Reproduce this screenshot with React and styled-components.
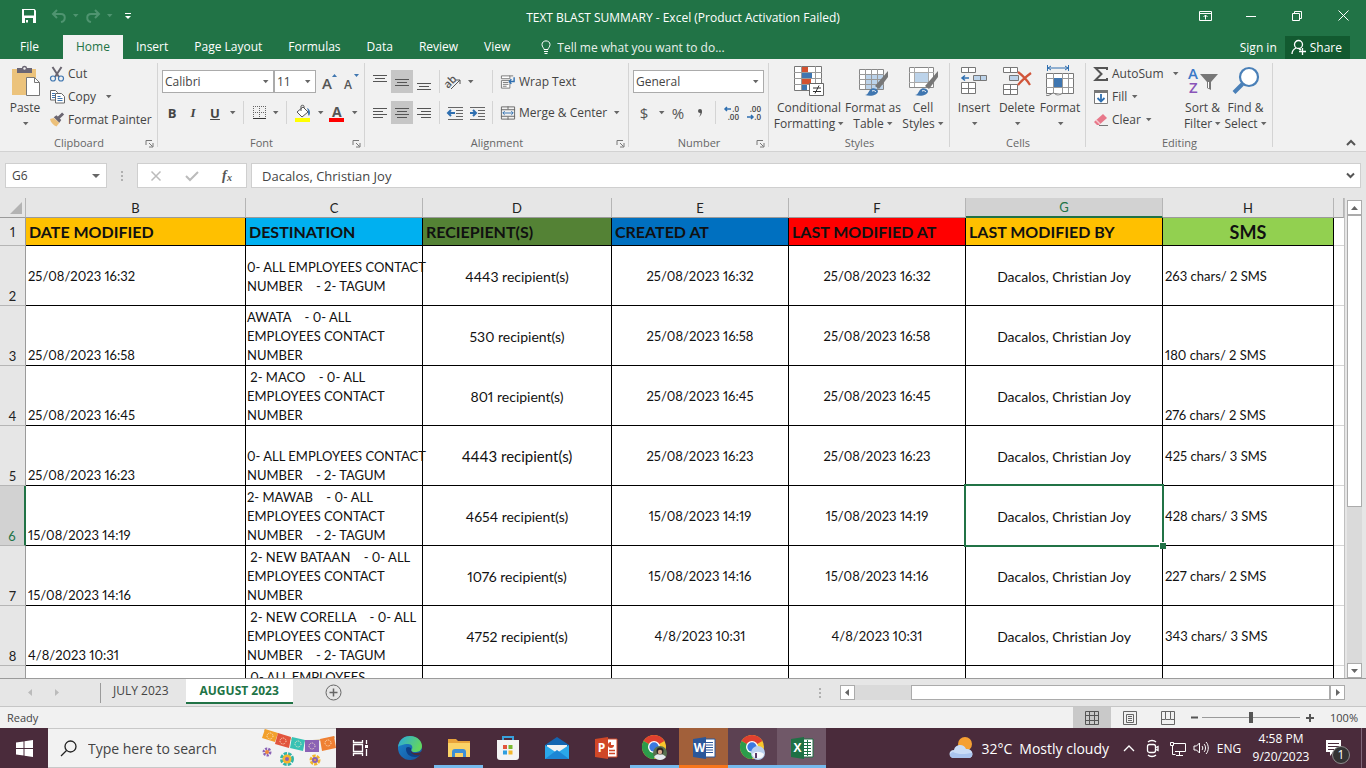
import React from "react";
import styled, { createGlobalStyle } from "styled-components";

const GlobalStyle = createGlobalStyle`
  * {
    box-sizing: border-box;
  }
  body {
    margin: 0;
    font-family: "Open Sans", "Noto Sans", sans-serif;
    font-size: 12px;
    color: #444444;
  }
  button, input, select {
    font: inherit;
    color: inherit;
    margin: 0;
    padding: 0;
    border: none;
    background: none;
  }
  a {
    color: inherit;
    text-decoration: none;
  }
`;

const GREEN = "#217346";

/* ---------- data ---------- */

const tabs = ["Insert", "Page Layout", "Formulas", "Data", "Review", "View"];

const columns = [
  { id: "B", width: 220, label: "DATE MODIFIED", color: "#ffc000" },
  { id: "C", width: 177, label: "DESTINATION", color: "#00b0f0" },
  { id: "D", width: 189, label: "RECIEPIENT(S)", color: "#548235" },
  { id: "E", width: 177, label: "CREATED AT", color: "#0070c0" },
  { id: "F", width: 177, label: "LAST MODIFIED AT", color: "#ff0000" },
  { id: "G", width: 197, label: "LAST MODIFIED BY", color: "#ffc000" },
  { id: "H", width: 171, label: "SMS", color: "#92d050" },
];

const rows = [
  { n: 2, date: "25/08/2023 16:32", dest: "0- ALL EMPLOYEES CONTACT\nNUMBER    - 2- TAGUM", to: "4443 recipient(s)", sms: "263 chars/ 2 SMS", dateAlign: "middle", destAlign: "middle" },
  { n: 3, date: "25/08/2023 16:58", dest: "AWATA    - 0- ALL\nEMPLOYEES CONTACT\nNUMBER", to: "530 recipient(s)", sms: "180 chars/ 2 SMS", smsAlign: "bottom" },
  { n: 4, date: "25/08/2023 16:45", dest: " 2- MACO    - 0- ALL\nEMPLOYEES CONTACT\nNUMBER", to: "801 recipient(s)", sms: "276 chars/ 2 SMS", smsAlign: "bottom" },
  { n: 5, date: "25/08/2023 16:23", dest: "0- ALL EMPLOYEES CONTACT\nNUMBER    - 2- TAGUM", to: "4443 recipient(s)", sms: "425 chars/ 3 SMS", large: true },
  { n: 6, date: "15/08/2023 14:19", dest: "2- MAWAB    - 0- ALL\nEMPLOYEES CONTACT\nNUMBER    - 2- TAGUM", to: "4654 recipient(s)", sms: "428 chars/ 3 SMS", active: true },
  { n: 7, date: "15/08/2023 14:16", dest: " 2- NEW BATAAN    - 0- ALL\nEMPLOYEES CONTACT\nNUMBER", to: "1076 recipient(s)", sms: "227 chars/ 2 SMS" },
  { n: 8, date: "4/8/2023 10:31", dest: " 2- NEW CORELLA    - 0- ALL\nEMPLOYEES CONTACT\nNUMBER    - 2- TAGUM", to: "4752 recipient(s)", sms: "343 chars/ 3 SMS" },
];

/* ---------- small drawings ---------- */

const Svg = ({ w = 16, h = 16, children, ...rest }) => (
  <svg width={w} height={h} viewBox={`0 0 ${w} ${h}`} fill="none" overflow="visible" aria-hidden="true" {...rest}>
    {children}
  </svg>
);

const Caret = ({ color = "#666" }) => (
  <Svg w={7} h={4}>
    <path d="M1 0h5.500L3.700 3.300z" fill={color} />
  </Svg>
);

const Lines = ({ rows: list, h = 16 }) => (
  <Svg w={16} h={h}>
    {list.map(([x, y, len]) => (
      <path key={y} d={`M${x} ${y}.500h${len}`} stroke="#555" />
    ))}
  </Svg>
);

const alignLeft = [[1, 2, 14], [1, 5, 10], [1, 8, 14], [1, 11, 10]];
const alignCenter = [[1, 2, 14], [3, 5, 10], [1, 8, 14], [3, 11, 10]];
const alignRight = [[1, 2, 14], [5, 5, 10], [1, 8, 14], [5, 11, 10]];

const SaveIcon = () => (
  <Svg w={16} h={16}>
    <path d="M1 1h12.500l1.500 1.500V15H1z" fill="#fff" />
    <path d="M3 2h10v5.500H3zM4 10h8v5H4z" fill={GREEN} />
    <path d="M5 12h2v2.500H5z" fill="#fff" />
  </Svg>
);

const UndoIcon = ({ flip }) => (
  <Svg w={16} h={14} style={flip ? { transform: "scaleX(-1)" } : undefined}>
    <path d="M6 1L2 5l4 4M2.500 5H10c5 0 5 7 0 8" stroke="#4f9470" strokeWidth="2" />
  </Svg>
);

const PasteIcon = () => (
  <Svg w={30} h={32}>
    <path d="M2 4h24v26H2z" fill="#ecc37c" />
    <path d="M7 3h5c0-3 5-3 5 0h5v5H7z" fill="#6b6674" />
    <circle cx="14.500" cy="3.500" r="1.200" fill="#f1f1f1" />
    <path d="M16.500 12.500h8l5 5v13h-13z" fill="#fff" stroke="#777" />
    <path d="M24.500 12.500v5h5" stroke="#777" />
  </Svg>
);

const CutIcon = () => (
  <Svg w={15} h={16}>
    <path d="M3 1l6.500 10M12 1L5.500 11" stroke="#6a6570" strokeWidth="2" />
    <circle cx="3.500" cy="12.500" r="2.500" stroke="#3f76b0" strokeWidth="1.200" />
    <circle cx="11.500" cy="12.500" r="2.500" stroke="#3f76b0" strokeWidth="1.200" />
  </Svg>
);

const CopyIcon = () => (
  <Svg w={16} h={16}>
    <path d="M1.500 1.500h5l2 2V11h-7z" fill="#fff" stroke="#666" />
    <path d="M3 4.500h3M3 6.500h3M3 8.500h3" stroke="#3f76b0" />
    <path d="M6.500 4.500h6l3 3V14h-9z" fill="#fff" stroke="#666" />
    <path d="M8.500 7.500h3M8.500 9.500h5M8.500 11.500h5" stroke="#3f76b0" />
  </Svg>
);

const BrushIcon = () => (
  <Svg w={17} h={16}>
    <path d="M1 7l4-1 6 5-3 4c-3-1-6-4-7-8z" fill="#ecc07a" />
    <path d="M5 5l3-2 5 5-2 3z" fill="#6a6570" />
    <path d="M10 6l5-5" stroke="#6a6570" strokeWidth="3" />
  </Svg>
);

const FontSizeIcon = ({ size, up }) => (
  <Svg w={18} h={20}>
    <text x="1" y="17" fontSize={size} fontWeight="600" fill="#555">A</text>
    <path d={up ? "M11 5l2.500-3L16 5z" : "M11 2l2.500 3L16 2z"} fill="#3f76b0" />
  </Svg>
);

const BordersIcon = () => (
  <Svg w={15} h={15}>
    <path d="M1 1.500h13M1 7.500h13M1.500 1v12M7.500 1v12M13.500 1v12" stroke="#666" strokeDasharray="1 1" />
    <path d="M1 13.500h13" stroke="#333" />
  </Svg>
);

const FillColorIcon = () => (
  <Svg w={18} h={18}>
    <path d="M3 8l6-5 5 5-6 5z" fill="#fff" stroke="#555" />
    <path d="M7 7V2c0-1 3-1 3 0v2" stroke="#555" />
    <path d="M13 4c3 1 4 5 2 8-2-2 0-4-2-8z" fill="#3f76b0" />
    <path d="M1 14h15v4H1z" fill="#ffff00" />
  </Svg>
);

const FontColorIcon = () => (
  <Svg w={18} h={20}>
    <text x="4" y="14" fontSize="14" fontWeight="700" fill="#555">A</text>
    <path d="M1 15h15v4H1z" fill="#ff0000" />
  </Svg>
);

const OrientIcon = () => (
  <Svg w={18} h={18}>
    <text x="1" y="13" fontSize="11" fontWeight="600" fill="#555" transform="rotate(-45 6 11)">ab</text>
    <path d="M7 16L16 7M12 7h4v4" stroke="#555" />
  </Svg>
);

const IndentIcon = ({ out }) => (
  <Svg w={17} h={14}>
    <path d="M1 1.500h15M9 4.500h7M9 7.500h7M9 10.500h7M1 13.500h15" stroke="#666" />
    <path d={out ? "M1 7h7M4 4L1 7l3 3" : "M1 7h6M4 4l3 3-3 3"} stroke="#2f6fb0" strokeWidth="2" />
  </Svg>
);

const WrapIcon = () => (
  <Svg w={17} h={16}>
    <path d="M1.500 1.500h9v3h-9zM1.500 6.500h9v8h-9z" fill="#fff" stroke="#777" />
    <path d="M3 8.500h6M3 10.500h6M3 12.500h4M10 1.500h4" stroke="#777" />
    <path d="M15 3v4.500H10M12 5l-2 2.500 2 2.500" stroke="#2f6fb0" strokeWidth="1.500" />
  </Svg>
);

const MergeIcon = () => (
  <Svg w={17} h={16}>
    <path d="M1.500 1.500h14v13h-14zM1 4.500h15M1 11.500h15M8.500 1v3M8.500 12v3" stroke="#666" />
    <path d="M3 8h11M5 6L3 8l2 2M12 6l2 2-2 2" stroke="#2f6fb0" />
  </Svg>
);

const DecimalIcon = ({ more }) => (
  <Svg w={17} h={18}>
    <text x="16" y="8" textAnchor="end" fontSize="8" fontWeight="600" fill="#444">{more ? ".0" : ".00"}</text>
    <text x="16" y="16" textAnchor="end" fontSize="8" fontWeight="600" fill="#444">{more ? ".00" : ".0"}</text>
    <path d={more ? "M2 5h6M4 3L2 5l2 2" : "M2 13h6M6 11l2 2-2 2"} stroke="#2f6fb0" strokeWidth="1.500" />
  </Svg>
);

const CondIcon = () => (
  <Svg w={32} h={32}>
    <path d="M1.500 1.500h27v24h-27z" fill="#fff" stroke="#777" />
    <path d="M1 7.500h28M1 13.500h28M1 19.500h28M8.500 1v24M22.500 1v24" stroke="#999" />
    <path d="M9 2h6v5H9zM9 14h9v5H9z" fill="#d35230" />
    <path d="M9 8h10v5H9z" fill="#3f76b0" />
    <path d="M9 20h5v5H9z" fill="#3f76b0" />
    <path d="M16.500 18.500h14v12h-14z" fill="#fff" stroke="#666" />
    <path d="M20 23h8M20 26.500h8M26 20.500l-4 8" stroke="#333" />
  </Svg>
);

const PaintBrush = () => (
  <>
    <path d="M31 6v6l-9 12-4-3z" fill="#777" />
    <path d="M8 30c3 0 3-3 5-5 2-3 7-2 8 1 0 4-7 6-13 4z" fill="#3f76b0" />
    <path d="M15 26c2-1 3 0 4 1" stroke="#fff" />
  </>
);

const TableStyleIcon = () => (
  <Svg w={32} h={32}>
    <path d="M2.500 4.500h24v20h-24z" fill="#fff" stroke="#888" />
    <path d="M9 10h17v14H9z" fill="#bcd3ea" />
    <path d="M2 9.500h25M2 14.500h25M2 19.500h25M8.500 4v20M14.500 4v20M20.500 4v20" stroke="#999" />
    <PaintBrush />
  </Svg>
);

const CellStyleIcon = () => (
  <Svg w={32} h={32}>
    <path d="M2.500 2.500h24v20h-24z" fill="#fff" stroke="#888" />
    <path d="M2 7.500h25M2 17.500h25M7.500 2v20M21.500 2v20" stroke="#aaa" />
    <path d="M8 8h13v9H8z" fill="#bcd3ea" />
    <PaintBrush />
  </Svg>
);

const InsertIcon = () => (
  <Svg w={30} h={30}>
    <path d="M2.500 1.500h14v5h-14zM9.500 1v6M2.500 16.500h14v11h-14zM2 22.500h14M9.500 16v11" fill="#fff" stroke="#777" />
    <path d="M14.500 9.500h13v5h-13zM21.500 9v6" fill="#bcd3ea" stroke="#777" />
    <path d="M3 12h7M6 9.500L3 12l3 2.500" stroke="#2f6fb0" strokeWidth="1.500" />
  </Svg>
);

const DeleteIcon = () => (
  <Svg w={32} h={30}>
    <path d="M2.500 1.500h14v5h-14zM9.500 1v6M2.500 18.500h14v10h-14zM2 23.500h14M9.500 18v11" fill="#fff" stroke="#777" />
    <path d="M8.500 9.500h9v5h-9z" fill="#bcd3ea" stroke="#777" />
    <path d="M17 6c4 3 9 8 12 13M30 7c-4 3-9 7-13 12" stroke="#d1553a" strokeWidth="2.200" />
  </Svg>
);

const FormatIcon = () => (
  <Svg w={30} h={32}>
    <path d="M2.500 0v6M23.500 0v6M3 3h20M6 1L3 3l3 2M20 1l3 2-3 2" stroke="#2f6fb0" />
    <path d="M1.500 8.500h27v20h-27z" fill="#fff" stroke="#777" />
    <path d="M1 13.500h28M1 22.500h28M8.500 8v20M17.500 8v20M23.500 8v20" stroke="#999" />
    <path d="M9 13h8v9H9z" fill="#3f76b0" />
    <path d="M1 30c3 2 5-2 8-2 2 2 4 3 9 0" fill="#fff" stroke="#777" />
  </Svg>
);

const SumIcon = () => (
  <Svg w={16} h={16}>
    <path d="M14 4V2H2.500l6 6-6 6H14v-2" stroke="#555" strokeWidth="2" />
  </Svg>
);

const FillIcon = () => (
  <Svg w={16} h={16}>
    <path d="M1.500 1.500h13v13h-13z" fill="#fff" stroke="#777" />
    <path d="M1 1h14v3H1z" fill="#777" />
    <path d="M8 5v7M4.500 9L8 12.500 11.500 9" stroke="#2f6fb0" strokeWidth="1.800" />
  </Svg>
);

const EraserIcon = () => (
  <Svg w={16} h={16}>
    <path d="M1 10l9-8 4 4-8 7H4z" fill="#e8788a" />
    <path d="M3 8l4 4" stroke="#f7c9d0" strokeWidth="1.500" />
    <path d="M6 13.500h9" stroke="#777" />
  </Svg>
);

const SortIcon = () => (
  <Svg w={30} h={30}>
    <text x="0" y="13" fontSize="15" fontWeight="600" fill="#3a79c8">A</text>
    <text x="1" y="27" fontSize="15" fontWeight="600" fill="#8a55b8">Z</text>
    <path d="M12 8h18l-7 8v8l-4-2v-6z" fill="#777" />
    <path d="M20.500 16v6" stroke="#fff" />
  </Svg>
);

const FindIcon = () => (
  <Svg w={30} h={30}>
    <circle cx="18" cy="11" r="9" fill="#fff" stroke="#4a80b8" strokeWidth="2.200" />
    <path d="M11.500 18L3 26.500" stroke="#4a80b8" strokeWidth="4" />
  </Svg>
);

const LauncherIcon = () => (
  <Svg w={9} h={9}>
    <path d="M1 6V1.500h6M4 4l3.500 3.500M8 4v4H4" stroke="#777" />
  </Svg>
);

const Picado = () => (
  <Svg w={74} h={38}>
    <path d="M2 1l14 4 13 5 14 2 15-1 15-3" stroke="#c9a46a" />
    <path d="M3 0l13 4-3 9-13-4z" fill="#f2a02c" />
    <path d="M16 4l13 4-2 11-14-4z" fill="#e2553d" />
    <path d="M30 8l13 3-2 11-13-3z" fill="#37c2b4" />
    <path d="M43 11h14v12H43z" fill="#8b62b5" />
    <path d="M58 10l14-3 2 12-14 3z" fill="#ef8033" />
    <g fill="none" stroke="#ffe9cf" strokeDasharray="1 1">
      <circle cx="8" cy="7" r="3" />
      <circle cx="21" cy="12" r="3" />
      <circle cx="36" cy="15" r="3" />
      <circle cx="50" cy="17" r="3" />
      <circle cx="66" cy="14" r="3" />
    </g>
    <circle cx="5" cy="23" r="3" stroke="#8b62b5" strokeWidth="3" strokeDasharray="2 1" />
    <circle cx="5" cy="23" r="2" fill="#f08a3c" />
    <circle cx="25" cy="30" r="5" stroke="#2fb5a8" strokeWidth="4" strokeDasharray="3 1" />
    <circle cx="25" cy="30" r="4.500" fill="#f5b52e" />
    <circle cx="25" cy="30" r="2" fill="#8b62b5" />
    <circle cx="53" cy="31" r="4" stroke="#f2b52c" strokeWidth="3" strokeDasharray="3 1" />
    <circle cx="53" cy="31" r="3" fill="#8b62b5" />
    <circle cx="53" cy="31" r="1" fill="#f2b52c" />
  </Svg>
);

const EdgeIcon = () => (
  <Svg w={26} h={26}>
    <defs>
      <linearGradient id="edgeTop" x1="0" y1="0" x2="1" y2="0.400">
        <stop offset="0" stopColor="#2aa7e0" />
        <stop offset="1" stopColor="#62d660" />
      </linearGradient>
      <linearGradient id="edgeLow" x1="0" y1="0" x2="1" y2="1">
        <stop offset="0" stopColor="#1c86cf" />
        <stop offset="1" stopColor="#15529c" />
      </linearGradient>
    </defs>
    <circle cx="13" cy="13" r="12" fill="url(#edgeLow)" />
    <path d="M1 12C2 4 8 1 13 1c8 0 12 6 12 10 0 5-4 6-7 6-4 0-4-2-3-3 1-2 0-5-4-5-5 0-9 2-10 3z" fill="url(#edgeTop)" />
    <path d="M9 14c0 5 4 8 9 8 3 0 5-2 6-3-1 1-11 2-10-6-3-2-5-1-5 1z" fill="#0e3f86" />
    <path d="M14 13c-1 3 1 5 5 5 3 0 5-1 6-2v3l-2 1c-6 1-11-2-9-7z" fill="#4a2b3b" />
  </Svg>
);

const FolderIcon = () => (
  <Svg w={24} h={22}>
    <path d="M1 2h8l2 2h12v5H1z" fill="#e8a33a" />
    <path d="M1 6h22v14H1z" fill="#fbd367" />
    <path d="M5 20v-5c0-2 1-3 3-3h8c2 0 3 1 3 3v5h-3v-4H8v4z" fill="#3d8fd6" />
  </Svg>
);

const StoreIcon = () => (
  <Svg w={24} h={26}>
    <path d="M7 6V2h10v4" stroke="#38a1dc" strokeWidth="2" />
    <path d="M1 5h22v17c0 2-1 3-3 3H4c-2 0-3-1-3-3z" fill="#f4f4f4" />
    <path d="M7 10h4v4H7z" fill="#e2553d" />
    <path d="M12.500 10h4v4h-4z" fill="#79b82f" />
    <path d="M7 15.500h4v4H7z" fill="#2f9fe0" />
    <path d="M12.500 15.500h4v4h-4z" fill="#f4b82c" />
  </Svg>
);

const MailIcon = () => (
  <Svg w={26} h={24}>
    <path d="M1 9l12-8 12 8v3H1z" fill="#1465b0" />
    <path d="M3 9h20v8H3z" fill="#f2f2f2" />
    <path d="M1 9l12 8L25 9v14H1z" fill="#2aa8ea" />
    <path d="M1 23l12-9 12 9z" fill="#1c86d4" />
  </Svg>
);

const OfficeIcon = ({ letter, color, kind }) => (
  <Svg w={24} h={24}>
    <path d="M12 3h11v18H12z" fill="#fff" stroke={color} />
    {kind === "sheet" && <path d="M14 6.500h7M14 9.500h7M14 12.500h7M14 15.500h7M14 18.500h7M17.500 4v16" stroke={color} />}
    {kind === "doc" && <path d="M14 6.500h7M14 9h7M14 11.500h7M14 14h7M14 16.500h7" stroke={color} />}
    {kind === "deck" && (
      <>
        <circle cx="17" cy="9" r="3" fill={color} />
        <path d="M17 9V5h4v4z" fill="#fff" />
        <path d="M15 14.500h6M15 17.500h6" stroke={color} strokeWidth="1.500" />
      </>
    )}
    <path d="M1 3l13-2v22L1 21z" fill={color} />
    <text x="7.500" y="16" fontSize="12" fontWeight="700" fill="#fff" textAnchor="middle">{letter}</text>
  </Svg>
);

const ChromeIcon = ({ snow }) => (
  <Svg w={28} h={28}>
    <circle cx="13" cy="13" r="12" fill="#f8c62c" />
    <path d="M13 13L2.600 7A12 12 0 0 1 23.400 7z" fill="#e0402f" />
    <path d="M2.600 7A12 12 0 0 0 13 25l5-9-5-3z" fill="#2c9c4b" />
    <circle cx="13" cy="13" r="6" fill="#fff" />
    <circle cx="13" cy="13" r="4.700" fill="#3c79e0" />
    <circle cx="19" cy="19" r="7" fill={snow ? "#b9d0ee" : "#58714f"} />
    {snow ? (
      <>
        <path d="M13 20c4-3 8-3 12 0-1 6-10 6-12 0z" fill="#f6f9fd" />
        <path d="M17 19v5" stroke="#5b3a68" strokeWidth="2" />
      </>
    ) : (
      <>
        <path d="M13 23c2-4 9-4 12 0-3 4-9 4-12 0z" fill="#e6e9ee" />
        <circle cx="19" cy="17" r="3.500" fill="#2c2523" />
        <circle cx="19" cy="18" r="2.200" fill="#d9a98d" />
      </>
    )}
  </Svg>
);

const WeatherIcon = () => (
  <Svg w={26} h={24}>
    <circle cx="17" cy="8" r="7" fill="#f5a033" />
    <path d="M6 22c-6 0-6-8 0-8 1-6 10-7 12-1 7-1 9 8 3 9z" fill="#c9dcf6" />
    <path d="M5 22c-4-1-4-5 0-6 6 3 12 2 19 1 1 3-1 5-4 5z" fill="#a9c4ee" />
  </Svg>
);

/* ---------- title bar and tabs ---------- */

const Window = styled.div`
  display: flex;
  flex-direction: column;
  height: 100vh;
  overflow: hidden;
  background: #e6e6e6;
`;

const TitleBar = styled.header`
  display: flex;
  height: 35px;
  flex: none;
  background: ${GREEN};
  color: #fff;
`;

const QuickAccess = styled.div`
  display: flex;
  align-items: center;
  width: 184px;
  padding-left: 21px;
  padding-bottom: 4px;
`;

const IconButton = styled.button`
  display: flex;
  align-items: center;
  justify-content: ${(p) => p.$justify || "center"};
  gap: 5px;
  flex: none;
  width: ${(p) => p.$width || 22}px;
  height: 23px;
  background: ${(p) => (p.$on ? "#c6c6c6" : "transparent")};
`;

const Title = styled.div`
  flex: 1;
  text-align: center;
  font-size: 12px;
  line-height: 35px;
  white-space: nowrap;
`;

const WindowButton = styled.button`
  display: flex;
  align-items: center;
  justify-content: center;
  width: 46px;
  height: 31px;
`;

const TabStrip = styled.nav`
  display: flex;
  align-items: center;
  flex: none;
  height: 24px;
  background: ${GREEN};
  color: #fff;
  font-size: 12px;
  white-space: nowrap;
`;

const Tab = styled.a`
  display: block;
  height: 24px;
  line-height: 24px;
  padding: 0 13px;
  background: ${(p) => (p.$active ? "#f1f1f1" : "transparent")};
  color: ${(p) => (p.$active ? GREEN : "#fff")};
`;

const FileTab = styled(Tab)`
  width: 63px;
  padding: 0 20px;
`;

const TellMe = styled.label`
  display: flex;
  align-items: center;
  gap: 6px;
  flex: 1;
  padding-left: 18px;

  input {
    width: 200px;
  }
  input::placeholder {
    color: #fff;
    opacity: 0.9;
  }
`;

const ShareButton = styled.button`
  display: flex;
  align-items: center;
  gap: 3px;
  height: 23px;
  margin: 0 16px 0 8px;
  padding: 0 8px 0 6px;
  background: #125a30;
`;

/* ---------- ribbon ---------- */

const Ribbon = styled.section`
  display: flex;
  flex: none;
  height: 93px;
  background: #f1f1f1;
  border-bottom: 1px solid #d2d2d2;
`;

const GroupBox = styled.div`
  position: relative;
  display: flex;
  flex-direction: column;
  flex: none;
  width: ${(p) => p.$width}px;

  &::after {
    content: "";
    position: absolute;
    right: 0;
    top: 4px;
    bottom: 4px;
    width: 1px;
    background: #d4d4d4;
  }
`;

const GroupBody = styled.div`
  display: flex;
  flex: 1;
  padding-left: ${(p) => p.$pad || 3}px;
`;

const GroupFoot = styled.div`
  display: grid;
  grid-template-columns: 18px 1fr 18px;
  height: 17px;
  line-height: 18px;
  font-size: 11px;
  color: #666;
  text-align: center;

  button {
    grid-column: 3;
    height: 18px;
    line-height: 0;
  }
  span {
    grid-column: 2;
  }
`;

const TwoRows = styled.div`
  display: flex;
  flex-direction: column;
  gap: 8px;
  padding-top: 11px;
`;

const ToolRow = styled.div`
  display: flex;
  align-items: center;
  height: 23px;
`;

const Divider = styled.i`
  width: 1px;
  height: 23px;
  margin: 0 ${(p) => p.$gap || 4}px;
  background: #d4d4d4;
`;

const CommandColumn = styled.div`
  display: flex;
  flex-direction: column;
  padding-top: 3px;
  width: ${(p) => p.$width || "auto"};
`;

const Command = styled.button`
  display: flex;
  align-items: center;
  gap: 3px;
  height: 23px;
  padding: 0 3px;
  white-space: nowrap;
  text-align: left;

  svg:first-child {
    flex: none;
    width: 16px;
  }
  span + svg {
    margin-left: ${(p) => p.$caretGap || 3}px;
  }
`;

const BigButton = styled.button`
  display: flex;
  flex-direction: column;
  align-items: center;
  flex: none;
  width: ${(p) => p.$width}px;
  padding-top: 6px;
  line-height: 16px;
  white-space: nowrap;

  > svg:first-child {
    height: 35px;
    flex: none;
    padding-bottom: 3px;
  }
  span {
    display: flex;
    align-items: center;
    gap: 2px;
    height: 16px;
  }
`;

const Combo = styled.div`
  display: flex;
  align-items: center;
  width: ${(p) => p.$width}px;
  height: 23px;
  margin-right: ${(p) => p.$gap || 0}px;
  background: #fff;
  border: 1px solid #ababab;

  select {
    flex: 1;
    min-width: 0;
    padding-left: 2px;
    appearance: none;
    outline: none;
  }
  svg {
    margin-right: 4px;
    flex: none;
  }
`;

const Letter = styled.span`
  font-weight: 700;
  font-size: 13px;
  font-style: ${(p) => (p.$italic ? "italic" : "normal")};
  font-family: ${(p) => (p.$italic ? '"Liberation Serif", serif' : "inherit")};
  text-decoration: ${(p) => (p.$underline ? "underline" : "none")};
  color: #444;
`;

const Symbol = styled.span`
  font-size: 15px;
  color: #555;
`;

const Collapse = styled.button`
  margin: auto 7px 3px auto;
  width: 16px;
  height: 12px;
  line-height: 0;
`;

const Group = ({ name, width, pad, launcher, children }) => (
  <GroupBox $width={width}>
    <GroupBody $pad={pad}>{children}</GroupBody>
    <GroupFoot>
      <span>{name}</span>
      {launcher && (
        <button aria-label={`${name} settings`}>
          <LauncherIcon />
        </button>
      )}
    </GroupFoot>
  </GroupBox>
);

const Picker = ({ label, value, width, gap }) => (
  <Combo $width={width} $gap={gap}>
    <select aria-label={label} defaultValue={value}>
      <option>{value}</option>
    </select>
    <Caret />
  </Combo>
);

/* ---------- formula bar ---------- */

const FormulaBar = styled.div`
  display: flex;
  flex: none;
  height: 46px;
  padding: 11px 5px 10px;
  font-size: 12px;
`;

const FormulaBox = styled.div`
  display: flex;
  align-items: center;
  flex: ${(p) => (p.$width ? "none" : 1)};
  width: ${(p) => (p.$width ? `${p.$width}px` : "auto")};
  height: 25px;
  padding: 0 5px 0 ${(p) => p.$pad || 6}px;
  margin-right: ${(p) => p.$gap || 0}px;
  background: #fff;
  border: 1px solid #cfcfcf;
  font-size: ${(p) => (p.$width ? 12 : 13)}px;

  input {
    flex: 1;
    min-width: 0;
    outline: none;
  }
`;

const Grip = styled.div`
  display: flex;
  flex-direction: column;
  justify-content: center;
  gap: 2px;
  width: ${(p) => p.$width}px;
  align-items: center;

  i {
    width: 2px;
    height: 2px;
    background: #b0b0b0;
  }
`;

/* ---------- sheet ---------- */

const SheetArea = styled.main`
  display: flex;
  flex: 1;
  min-height: 0;
`;

const SheetView = styled.div`
  flex: 1;
  min-width: 0;
  overflow: hidden;
  border-right: 1px solid #c0c0c0;
`;

const Table = styled.table`
  width: 100%;
  table-layout: fixed;
  border-collapse: separate;
  border-spacing: 0;
  color: #111;
  font-family: Lato, "Open Sans", sans-serif;
  font-size: 13px;
  font-variant-ligatures: none;
  font-variant-numeric: proportional-nums;
`;

const ColHead = styled.th`
  height: 20px;
  padding: 0;
  font-weight: 400;
  background: ${(p) => (p.$active ? "#d2d2d2" : "#e6e6e6")};
  color: ${(p) => (p.$active ? GREEN : "#222")};
  border-right: 1px solid #b5b5b5;
  border-bottom: ${(p) => (p.$active ? `2px solid ${GREEN}` : "1px solid #9b9b9b")};
  line-height: 18px;
  text-align: center;

  svg {
    display: block;
    margin: 2px 2px 0 auto;
  }
`;

const RowHead = styled.th`
  padding: 0;
  font-weight: 400;
  line-height: 18px;
  text-align: center;
  vertical-align: ${(p) => p.$align || "bottom"};
  background: ${(p) => (p.$active ? "#d2d2d2" : "#e6e6e6")};
  color: ${(p) => (p.$active ? GREEN : "#222")};
  border-right: ${(p) => (p.$active ? `2px solid ${GREEN}` : "1px solid #9b9b9b")};
  border-bottom: 1px solid #b5b5b5;
`;

const Label = styled.td`
  height: 28px;
  padding: 1px 3px 0;
  background: ${(p) => p.$color};
  border-right: 1px solid #000;
  border-bottom: 1px solid #000;
  font-weight: 700;
  font-size: ${(p) => (p.$center ? 18 : 16)}px;
  line-height: 26px;
  text-align: ${(p) => (p.$center ? "center" : "left")};
  white-space: nowrap;
`;

const Cell = styled.td`
  height: 60px;
  padding: 2px ${(p) => (p.$tight ? 1 : 2)}px 0;
  border-right: 1px solid #000;
  border-bottom: 1px solid #000;
  background: #fff;
  font-size: ${(p) => p.$size || 13}px;
  line-height: 19px;
  text-align: ${(p) => (p.$center ? "center" : "left")};
  vertical-align: ${(p) => p.$align || "middle"};
  white-space: pre;
`;

const ActiveCell = styled(Cell)`
  position: relative;
`;

const Blank = styled.td`
  background: #fff;
  border-bottom: 1px solid #d4d4d4;
`;

const Selection = styled.div`
  position: absolute;
  inset: -2px;
  border: 2px solid ${GREEN};

  &::after {
    content: "";
    position: absolute;
    right: -4px;
    bottom: -4px;
    width: 6px;
    height: 6px;
    background: ${GREEN};
    border: 1px solid #fff;
    border-width: 1px 0 0 1px;
  }
`;

const VScroll = styled.div`
  display: flex;
  flex-direction: column;
  width: 21px;
  padding: 2px 4px 0 2px;
`;

const ScrollButton = styled.button`
  display: flex;
  align-items: center;
  justify-content: center;
  flex: none;
  width: 15px;
  height: 15px;
  background: #fff;
  border: 1px solid #ababab;
`;

const Thumb = styled.div`
  flex: ${(p) => p.$grow};
  background: #fff;
  border: 1px solid #ababab;
`;

const Track = styled.div`
  flex: ${(p) => p.$grow};
  background: #dadada;
`;

/* ---------- sheet tabs and status bar ---------- */

const SheetBar = styled.div`
  display: flex;
  align-items: center;
  flex: none;
  height: 29px;
  padding: 0 21px 0 15px;
  border-top: 1px solid #9b9b9b;
  border-bottom: 1px solid #c6c6c6;
  white-space: nowrap;
`;

const SheetNav = styled.div`
  display: flex;
  align-items: center;
  width: 86px;
  height: 20px;
  border-right: 1px solid #9b9b9b;
`;

const SheetTab = styled.button`
  align-self: flex-start;
  height: 25px;
  padding: ${(p) => (p.$active ? "0 14px" : "0 17px 0 12px")};
  font-size: 12px;
  font-weight: ${(p) => (p.$active ? 700 : 400)};
  color: ${(p) => (p.$active ? GREEN : "#444")};
  background: ${(p) => (p.$active ? "#fff" : "transparent")};
  border-bottom: 2px solid ${(p) => (p.$active ? GREEN : "transparent")};
`;

const HScroll = styled.div`
  display: flex;
  width: 38%;
`;

const StatusBar = styled.footer`
  display: flex;
  align-items: center;
  flex: none;
  height: 21px;
  padding: 0 8px 0 7px;
  background: #f1f1f1;
  font-size: 11px;
`;

const ViewButton = styled.button`
  display: flex;
  align-items: center;
  justify-content: center;
  width: 38px;
  height: 21px;
  background: ${(p) => (p.$on ? "#c9c9c9" : "transparent")};
`;

const ZoomSlider = styled.input`
  appearance: none;
  width: 98px;
  height: 12px;
  margin: 0 4px 0 0;
  background: linear-gradient(#9a9a9a, #9a9a9a) center / 100% 1px no-repeat;

  &::-webkit-slider-thumb {
    appearance: none;
    width: 4px;
    height: 11px;
    background: #555;
  }
`;

const Spacer = styled.div`
  flex: 1;
`;

/* ---------- task bar ---------- */

const TaskBar = styled.footer`
  display: flex;
  align-items: center;
  flex: none;
  height: 40px;
  background: #4a2b3b;
  color: #fff;
`;

const StartButton = styled.button`
  display: flex;
  align-items: center;
  justify-content: center;
  width: 48px;
  height: 40px;
`;

const SearchBox = styled.label`
  display: flex;
  align-items: center;
  width: 288px;
  height: 40px;
  padding-left: 12px;
  background: #f2f2f2;
  border: 1px solid #c8c8c8;
  border-width: 1px 0;
  color: #333;

  input {
    flex: 1;
    min-width: 0;
    padding-left: 11px;
    font-size: 14px;
    outline: none;
  }
  input::placeholder {
    color: #444;
  }
`;

const TaskButton = styled.button`
  display: flex;
  align-items: center;
  justify-content: center;
  width: 49px;
  height: 40px;
  background: ${(p) => p.$bg || "transparent"};
  border-bottom: 3px solid ${(p) => p.$bar || "transparent"};
  border-top: 3px solid transparent;
`;

const Weather = styled.button`
  display: flex;
  align-items: center;
  gap: 7px;
  margin-right: 8px;
  font-size: 14px;
  white-space: nowrap;
`;

const TrayButton = styled.button`
  display: flex;
  align-items: center;
  justify-content: center;
  width: 24px;
  height: 40px;
`;

const Clock = styled.div`
  width: 72px;
  margin-right: 6px;
  font-size: 12px;
  line-height: 18px;
  text-align: center;
`;

const Notice = styled.button`
  position: relative;
  width: 30px;
  height: 40px;
  margin-right: 8px;

  svg {
    display: block;
    margin-left: 2px;
  }
  span {
    position: absolute;
    right: 3px;
    bottom: 4px;
    width: 18px;
    height: 18px;
    border: 1px solid #8d8d8d;
    border-radius: 50%;
    background: #333;
    font-size: 12px;
    line-height: 16px;
  }
`;

const Peek = styled.i`
  width: 1px;
  height: 40px;
  margin-right: 4px;
  background: #80687a;
`;

function Header() {
  return (
    <>
      <TitleBar>
        <QuickAccess>
          <IconButton $width={16} aria-label="Save"><SaveIcon /></IconButton>
          <IconButton $width={42} $justify="flex-end" aria-label="Undo"><UndoIcon /><Caret color="#4f9470" /></IconButton>
          <IconButton $width={34} $justify="flex-end" aria-label="Redo"><UndoIcon flip /><Caret color="#4f9470" /></IconButton>
          <IconButton $width={30} aria-label="Customize toolbar">
            <Svg w={8} h={8}><path d="M1 1.500h6" stroke="#fff" /><path d="M1 4h6L4 7z" fill="#fff" /></Svg>
          </IconButton>
        </QuickAccess>
        <Title>TEXT BLAST SUMMARY - Excel (Product Activation Failed)</Title>
        <WindowButton aria-label="Ribbon display options">
          <Svg w={14} h={12}><path d="M1.500 1.500h12v9h-12zM1 3.500h12M7.500 9.500V5M5.500 7l2-2 2 2" stroke="#fff" /></Svg>
        </WindowButton>
        <WindowButton aria-label="Minimize"><Svg w={10} h={10}><path d="M0 5.500h10" stroke="#fff" /></Svg></WindowButton>
        <WindowButton aria-label="Restore">
          <Svg w={10} h={10}><path d="M.5 2.500h7v7h-7zM2.500 2V.5h7v7H8" stroke="#fff" /></Svg>
        </WindowButton>
        <WindowButton aria-label="Close"><Svg w={11} h={11}><path d="M.5.5l10 10M10.500.5l-10 10" stroke="#fff" /></Svg></WindowButton>
      </TitleBar>
      <TabStrip>
        <FileTab href="#file">File</FileTab>
        <Tab href="#home" $active>Home</Tab>
        {tabs.map((t) => (
          <Tab key={t} href={`#${t}`}>{t}</Tab>
        ))}
        <TellMe>
          <Svg w={10} h={14}><path d="M3 9.500C3 8 1 7 1 4.500 1 -.3 9 -.3 9 4.500 9 7 7 8 7 9.500zM3 11.500h4M3.500 13.500h3" stroke="#fff" /></Svg>
          <input aria-label="Tell me what you want to do" placeholder="Tell me what you want to do..." />
        </TellMe>
        <a href="#signin">Sign in</a>
        <ShareButton>
          <Svg w={16} h={16}><circle cx="7.500" cy="5.500" r="4" stroke="#fff" strokeWidth="1.300" /><path d="M1 15c0-3 2-5 4-6M8 10c1 0 2 1 2 1M8 12.500h7M11.500 9v7" stroke="#fff" strokeWidth="1.300" /></Svg>
          Share
        </ShareButton>
      </TabStrip>
    </>
  );
}

function HomeRibbon() {
  return (
    <Ribbon>
      <Group name="Clipboard" width={158} pad={4} launcher>
        <BigButton $width={42}>
          <PasteIcon />
          <span>Paste</span>
          <span><Caret /></span>
        </BigButton>
        <CommandColumn>
          <Command><CutIcon /><span>Cut</span></Command>
          <Command $caretGap={6}><CopyIcon /><span>Copy</span><Caret /></Command>
          <Command><BrushIcon /><span>Format Painter</span></Command>
        </CommandColumn>
      </Group>

      <Group name="Font" width={207} pad={4} launcher>
        <TwoRows>
          <ToolRow>
            <Picker label="Font" value="Calibri" width={112} />
            <Picker label="Font size" value="11" width={42} gap={3} />
            <IconButton aria-label="Increase font size"><FontSizeIcon size={15} up /></IconButton>
            <IconButton aria-label="Decrease font size"><FontSizeIcon size={12} /></IconButton>
          </ToolRow>
          <ToolRow>
            <IconButton $width={20} aria-label="Bold"><Letter>B</Letter></IconButton>
            <IconButton aria-label="Italic"><Letter $italic>I</Letter></IconButton>
            <IconButton aria-label="Underline"><Letter $underline>U</Letter></IconButton>
            <IconButton $width={12} aria-label="Underline options"><Caret /></IconButton>
            <Divider $gap={5} />
            <IconButton $width={20} aria-label="Borders"><BordersIcon /></IconButton>
            <IconButton $width={12} aria-label="Border options"><Caret /></IconButton>
            <Divider $gap={5} />
            <IconButton aria-label="Fill color"><FillColorIcon /></IconButton>
            <IconButton $width={12} aria-label="Fill color options"><Caret /></IconButton>
            <IconButton aria-label="Font color"><FontColorIcon /></IconButton>
            <IconButton $width={12} aria-label="Font color options"><Caret /></IconButton>
          </ToolRow>
        </TwoRows>
      </Group>

      <Group name="Alignment" width={264} pad={4} launcher>
        <TwoRows>
          <ToolRow>
            <IconButton aria-label="Top align"><Lines rows={[[1, 1, 14], [3, 4, 10], [1, 7, 14]]} /></IconButton>
            <IconButton $on aria-label="Middle align"><Lines rows={[[1, 5, 14], [3, 8, 10], [1, 11, 14]]} /></IconButton>
            <IconButton aria-label="Bottom align"><Lines rows={[[1, 9, 14], [3, 12, 10], [1, 15, 14]]} /></IconButton>
            <Divider />
            <IconButton $width={44} $justify="flex-start" aria-label="Orientation"><OrientIcon /><Caret /></IconButton>
            <Divider />
            <Command><WrapIcon /><span>Wrap Text</span></Command>
          </ToolRow>
          <ToolRow>
            <IconButton aria-label="Align left"><Lines rows={alignLeft} h={14} /></IconButton>
            <IconButton $on aria-label="Center"><Lines rows={alignCenter} h={14} /></IconButton>
            <IconButton aria-label="Align right"><Lines rows={alignRight} h={14} /></IconButton>
            <Divider />
            <IconButton aria-label="Decrease indent"><IndentIcon out /></IconButton>
            <IconButton aria-label="Increase indent"><IndentIcon /></IconButton>
            <Divider />
            <Command><MergeIcon /><span>Merge &amp; Center</span><Caret /></Command>
          </ToolRow>
        </TwoRows>
      </Group>

      <Group name="Number" width={140} pad={4} launcher>
        <TwoRows>
          <ToolRow><Picker label="Number format" value="General" width={131} /></ToolRow>
          <ToolRow>
            <IconButton aria-label="Currency"><Symbol>$</Symbol></IconButton>
            <IconButton $width={12} aria-label="Currency options"><Caret /></IconButton>
            <IconButton aria-label="Percent"><Symbol>%</Symbol></IconButton>
            <IconButton aria-label="Comma style"><Svg w={8} h={10}><circle cx="4" cy="3" r="2" fill="#555" /><path d="M6 3c0 3-1 4-3 6 1-2 2-3 1-5z" fill="#555" /></Svg></IconButton>
            <Divider />
            <IconButton aria-label="Increase decimal"><DecimalIcon more /></IconButton>
            <IconButton aria-label="Decrease decimal"><DecimalIcon /></IconButton>
          </ToolRow>
        </TwoRows>
      </Group>

      <Group name="Styles" width={181} pad={4}>
        <BigButton $width={72}><CondIcon /><span>Conditional</span><span>Formatting<Caret /></span></BigButton>
        <BigButton $width={56}><TableStyleIcon /><span>Format as</span><span>Table<Caret /></span></BigButton>
        <BigButton $width={44}><CellStyleIcon /><span>Cell</span><span>Styles<Caret /></span></BigButton>
      </Group>

      <Group name="Cells" width={136}>
        <BigButton $width={42}><InsertIcon /><span>Insert</span><span><Caret /></span></BigButton>
        <BigButton $width={44}><DeleteIcon /><span>Delete</span><span><Caret /></span></BigButton>
        <BigButton $width={42}><FormatIcon /><span>Format</span><span><Caret /></span></BigButton>
      </Group>

      <Group name="Editing" width={187} pad={4}>
        <CommandColumn $width="91px">
          <Command $caretGap={5}><SumIcon /><span>AutoSum</span><Caret /></Command>
          <Command $caretGap={1}><FillIcon /><span>Fill</span><Caret /></Command>
          <Command $caretGap={1}><EraserIcon /><span>Clear</span><Caret /></Command>
        </CommandColumn>
        <BigButton $width={43}><SortIcon /><span>Sort &amp;</span><span>Filter<Caret /></span></BigButton>
        <BigButton $width={43}><FindIcon /><span>Find &amp;</span><span>Select<Caret /></span></BigButton>
      </Group>

      <Collapse aria-label="Collapse the ribbon">
        <Svg w={10} h={7}><path d="M1 6l4-4 4 4" stroke="#555" strokeWidth="2" /></Svg>
      </Collapse>
    </Ribbon>
  );
}

function Formula() {
  return (
    <FormulaBar>
      <FormulaBox $width={102}>
        <input aria-label="Name box" defaultValue="G6" />
        <Svg w={9} h={6}><path d="M0 1h8L4 5z" fill="#666" /></Svg>
      </FormulaBox>
      <Grip $width={30}><i /><i /><i /></Grip>
      <FormulaBox $width={110} $gap={4} $pad={1}>
        <IconButton $width={34} aria-label="Cancel"><Svg w={12} h={12}><path d="M1.500 1.500l9 9M10.500 1.500l-9 9" stroke="#bbb" strokeWidth="1.500" /></Svg></IconButton>
        <IconButton $width={38} aria-label="Enter"><Svg w={14} h={12}><path d="M1 6l4 4 8-8" stroke="#bbb" strokeWidth="2" /></Svg></IconButton>
        <IconButton $width={34} aria-label="Insert function">
          <Svg w={14} h={16}><text x="1" y="12" fontSize="14" fontStyle="italic" fontWeight="700" fontFamily="Liberation Serif" fill="#555">f</text><text x="6" y="13" fontSize="10" fontStyle="italic" fontWeight="700" fontFamily="Liberation Serif" fill="#555">x</text></Svg>
        </IconButton>
      </FormulaBox>
      <FormulaBox $pad={10}>
        <input aria-label="Formula" defaultValue="Dacalos, Christian Joy" />
        <Svg w={9} h={7}><path d="M1 1.500l3.500 3.500L8 1.500" stroke="#555" strokeWidth="2" /></Svg>
      </FormulaBox>
    </FormulaBar>
  );
}

function Sheet() {
  return (
    <SheetArea>
      <SheetView>
        <Table>
          <colgroup>
            <col width="26" />
            {columns.map((c) => (
              <col key={c.id} width={c.width} />
            ))}
            <col />
          </colgroup>
          <thead>
            <tr>
              <ColHead aria-label="Select all"><Svg w={13} h={13}><path d="M12 0v12H0z" fill="#b3b3b3" /></Svg></ColHead>
              {columns.map((c) => (
                <ColHead key={c.id} scope="col" $active={c.id === "G"}>{c.id}</ColHead>
              ))}
              <ColHead as="td" />
            </tr>
          </thead>
          <tbody>
            <tr>
              <RowHead scope="row" $align="middle">1</RowHead>
              {columns.map((c) => (
                <Label key={c.id} $color={c.color} $center={c.id === "H"}>{c.label}</Label>
              ))}
              <Blank />
            </tr>
            {rows.map((r) => (
              <tr key={r.n}>
                <RowHead scope="row" $active={r.active}>{r.n}</RowHead>
                <Cell $align={r.dateAlign || "bottom"}>{r.date}</Cell>
                <Cell $tight $align={r.destAlign || "bottom"}>{r.dest}</Cell>
                <Cell $center $size={r.large ? 15 : 14}>{r.to}</Cell>
                <Cell $center>{r.date}</Cell>
                <Cell $center>{r.date}</Cell>
                {r.active ? (
                  <ActiveCell $center $size={14}>
                    Dacalos, Christian Joy
                    <Selection />
                  </ActiveCell>
                ) : (
                  <Cell $center $size={14}>Dacalos, Christian Joy</Cell>
                )}
                <Cell $align={r.smsAlign}>{r.sms}</Cell>
                <Blank />
              </tr>
            ))}
            <tr>
              <RowHead scope="row">9</RowHead>
              <Cell />
              <Cell $tight $align="top"> 0- ALL EMPLOYEES</Cell>
              <Cell />
              <Cell />
              <Cell />
              <Cell />
              <Cell />
              <Blank />
            </tr>
          </tbody>
        </Table>
      </SheetView>
      <VScroll>
        <ScrollButton aria-label="Scroll up"><Svg w={7} h={4}><path d="M0 4h7L3.500 0z" fill="#666" /></Svg></ScrollButton>
        <Thumb $grow={65} />
        <Track $grow={35} />
        <ScrollButton aria-label="Scroll down"><Svg w={7} h={4}><path d="M0 0h7L3.500 4z" fill="#666" /></Svg></ScrollButton>
      </VScroll>
    </SheetArea>
  );
}

function Bottom() {
  return (
    <>
      <SheetBar>
        <SheetNav>
          <IconButton $width={28} aria-label="Previous sheet"><Svg w={5} h={7}><path d="M5 0v7L1 3.500z" fill="#bbb" /></Svg></IconButton>
          <IconButton $width={28} aria-label="Next sheet"><Svg w={5} h={7}><path d="M0 0v7l4-3.500z" fill="#bbb" /></Svg></IconButton>
        </SheetNav>
        <SheetTab>JULY 2023</SheetTab>
        <SheetTab $active>AUGUST 2023</SheetTab>
        <IconButton $width={82} aria-label="New sheet"><Svg w={17} h={17}><circle cx="8.500" cy="8.500" r="7.500" stroke="#666" /><path d="M4.500 8.500h8M8.500 4.500v8" stroke="#666" strokeWidth="1.500" /></Svg></IconButton>
        <Spacer />
        <Grip $width={40}><i /><i /><i /></Grip>
        <HScroll>
          <ScrollButton aria-label="Scroll left"><Svg w={4} h={7}><path d="M4 0v7L0 3.500z" fill="#666" /></Svg></ScrollButton>
          <Track $grow={12} />
          <Thumb $grow={88} />
          <ScrollButton aria-label="Scroll right"><Svg w={4} h={7}><path d="M0 0v7l4-3.500z" fill="#666" /></Svg></ScrollButton>
        </HScroll>
      </SheetBar>
      <StatusBar>
        Ready
        <Spacer />
        <ViewButton $on aria-label="Normal view"><Svg w={14} h={14}><path d="M.5.5h13v13H.5zM0 4.500h14M0 9.500h14M4.500 0v14M9.500 0v14" stroke="#555" /></Svg></ViewButton>
        <ViewButton aria-label="Page layout view"><Svg w={14} h={14}><path d="M.5.5h13v13H.5zM3.500 3.500h7v8h-7zM5 5.500h4M5 7.500h4M5 9.500h4" stroke="#666" /></Svg></ViewButton>
        <ViewButton aria-label="Page break view"><Svg w={14} h={14}><path d="M.5.5h13v13H.5zM4.500 0v8.500h5V0M0 8.500h4M10 8.500h4" stroke="#666" /></Svg></ViewButton>
        <IconButton $width={15} aria-label="Zoom out"><Svg w={7} h={7}><path d="M0 3.500h7" stroke="#555" strokeWidth="2" /></Svg></IconButton>
        <ZoomSlider type="range" min="10" max="190" defaultValue="100" aria-label="Zoom" />
        <IconButton $width={12} aria-label="Zoom in"><Svg w={8} h={8}><path d="M0 4h8M4 0v8" stroke="#555" strokeWidth="2" /></Svg></IconButton>
        <IconButton as="span" $width={42} $justify="flex-end">100%</IconButton>
      </StatusBar>
    </>
  );
}

function WindowsBar() {
  return (
    <TaskBar>
      <StartButton aria-label="Start">
        <Svg w={17} h={17}><path d="M0 2.500L7.500 1.500V8H0zM8.500 1.300L17 0v8H8.500zM0 9h7.500v6.500L0 14.500zM8.500 9H17v8l-8.500-1.300z" fill="#fff" /></Svg>
      </StartButton>
      <SearchBox>
        <Svg w={17} h={17}><circle cx="10.500" cy="6.500" r="5.500" stroke="#222" strokeWidth="1.300" /><path d="M6.500 10.500L1 16" stroke="#222" strokeWidth="1.300" /></Svg>
        <input aria-label="Search" placeholder="Type here to search" />
        <Picado />
      </SearchBox>
      <TaskButton aria-label="Task view">
        <Svg w={17} h={16}><path d="M1.500 4.500h9v7h-9zM1.500 0v2.500h9V0M1.500 16v-2.500h9V16M14.500 0v4M14.500 9v7" stroke="#fff" strokeWidth="1.300" /><path d="M13 5h3v3h-3z" fill="#fff" /></Svg>
      </TaskButton>
      <TaskButton aria-label="Edge"><EdgeIcon /></TaskButton>
      <TaskButton $bar="#76b9ed" aria-label="File Explorer"><FolderIcon /></TaskButton>
      <TaskButton aria-label="Store"><StoreIcon /></TaskButton>
      <TaskButton aria-label="Mail"><MailIcon /></TaskButton>
      <TaskButton aria-label="PowerPoint"><OfficeIcon letter="P" color="#d04727" kind="deck" /></TaskButton>
      <TaskButton $bar="#76b9ed" aria-label="Chrome"><ChromeIcon /></TaskButton>
      <TaskButton $bar="#f7751c" $bg="#a2603a" aria-label="Word"><OfficeIcon letter="W" color="#2b579a" kind="doc" /></TaskButton>
      <TaskButton $bar="#76b9ed" $bg="#5c4152" aria-label="Chrome second profile"><ChromeIcon snow /></TaskButton>
      <TaskButton $bar="#76b9ed" $bg="#705868" aria-label="Excel"><OfficeIcon letter="X" color="#1e7145" kind="sheet" /></TaskButton>
      <Spacer />
      <Weather><WeatherIcon /><span>32°C</span><span>Mostly cloudy</span></Weather>
      <TrayButton aria-label="Show hidden icons"><Svg w={12} h={8}><path d="M1 7l5-5 5 5" stroke="#fff" strokeWidth="1.300" /></Svg></TrayButton>
      <TrayButton aria-label="Meet now"><Svg w={14} h={18}><rect x="1.500" y="5.500" width="8" height="8" rx="2" stroke="#fff" strokeWidth="1.300" /><path d="M10 8.500l2-1v4l-2-1M2 3c2-2 6-2 8 0M2 16c2 2 6 2 8 0" stroke="#fff" strokeWidth="1.300" /></Svg></TrayButton>
      <TrayButton aria-label="Network"><Svg w={17} h={15}><path d="M4.500 2.500h12v8H6M10.500 11v3M7 14.500h7M1.500 1.500h3v3h-3zM3.500 5v8.500h3" stroke="#fff" /></Svg></TrayButton>
      <TrayButton aria-label="Volume"><Svg w={17} h={14}><path d="M1 5h2.500L6.500 2v10l-3-3H1zM9 5c1 1 1 3 0 4M11 3c2 2 2 6 0 8M13 1c3 3 3 9 0 12" stroke="#fff" /></Svg></TrayButton>
      <IconButton as="span" $width={32}>ENG</IconButton>
      <Clock>4:58 PM<br />9/20/2023</Clock>
      <Notice aria-label="Notifications">
        <Svg w={18} h={18}><path d="M1 1h15v12H8l-3 4v-4H1z" fill="#fff" /><path d="M3 4.500h11M3 7.500h11M3 10.500h6" stroke="#4a2b3b" /></Svg>
        <span>1</span>
      </Notice>
      <Peek />
    </TaskBar>
  );
}

export default function App() {
  return (
    <Window>
      <GlobalStyle />
      <Header />
      <HomeRibbon />
      <Formula />
      <Sheet />
      <Bottom />
      <WindowsBar />
    </Window>
  );
}
